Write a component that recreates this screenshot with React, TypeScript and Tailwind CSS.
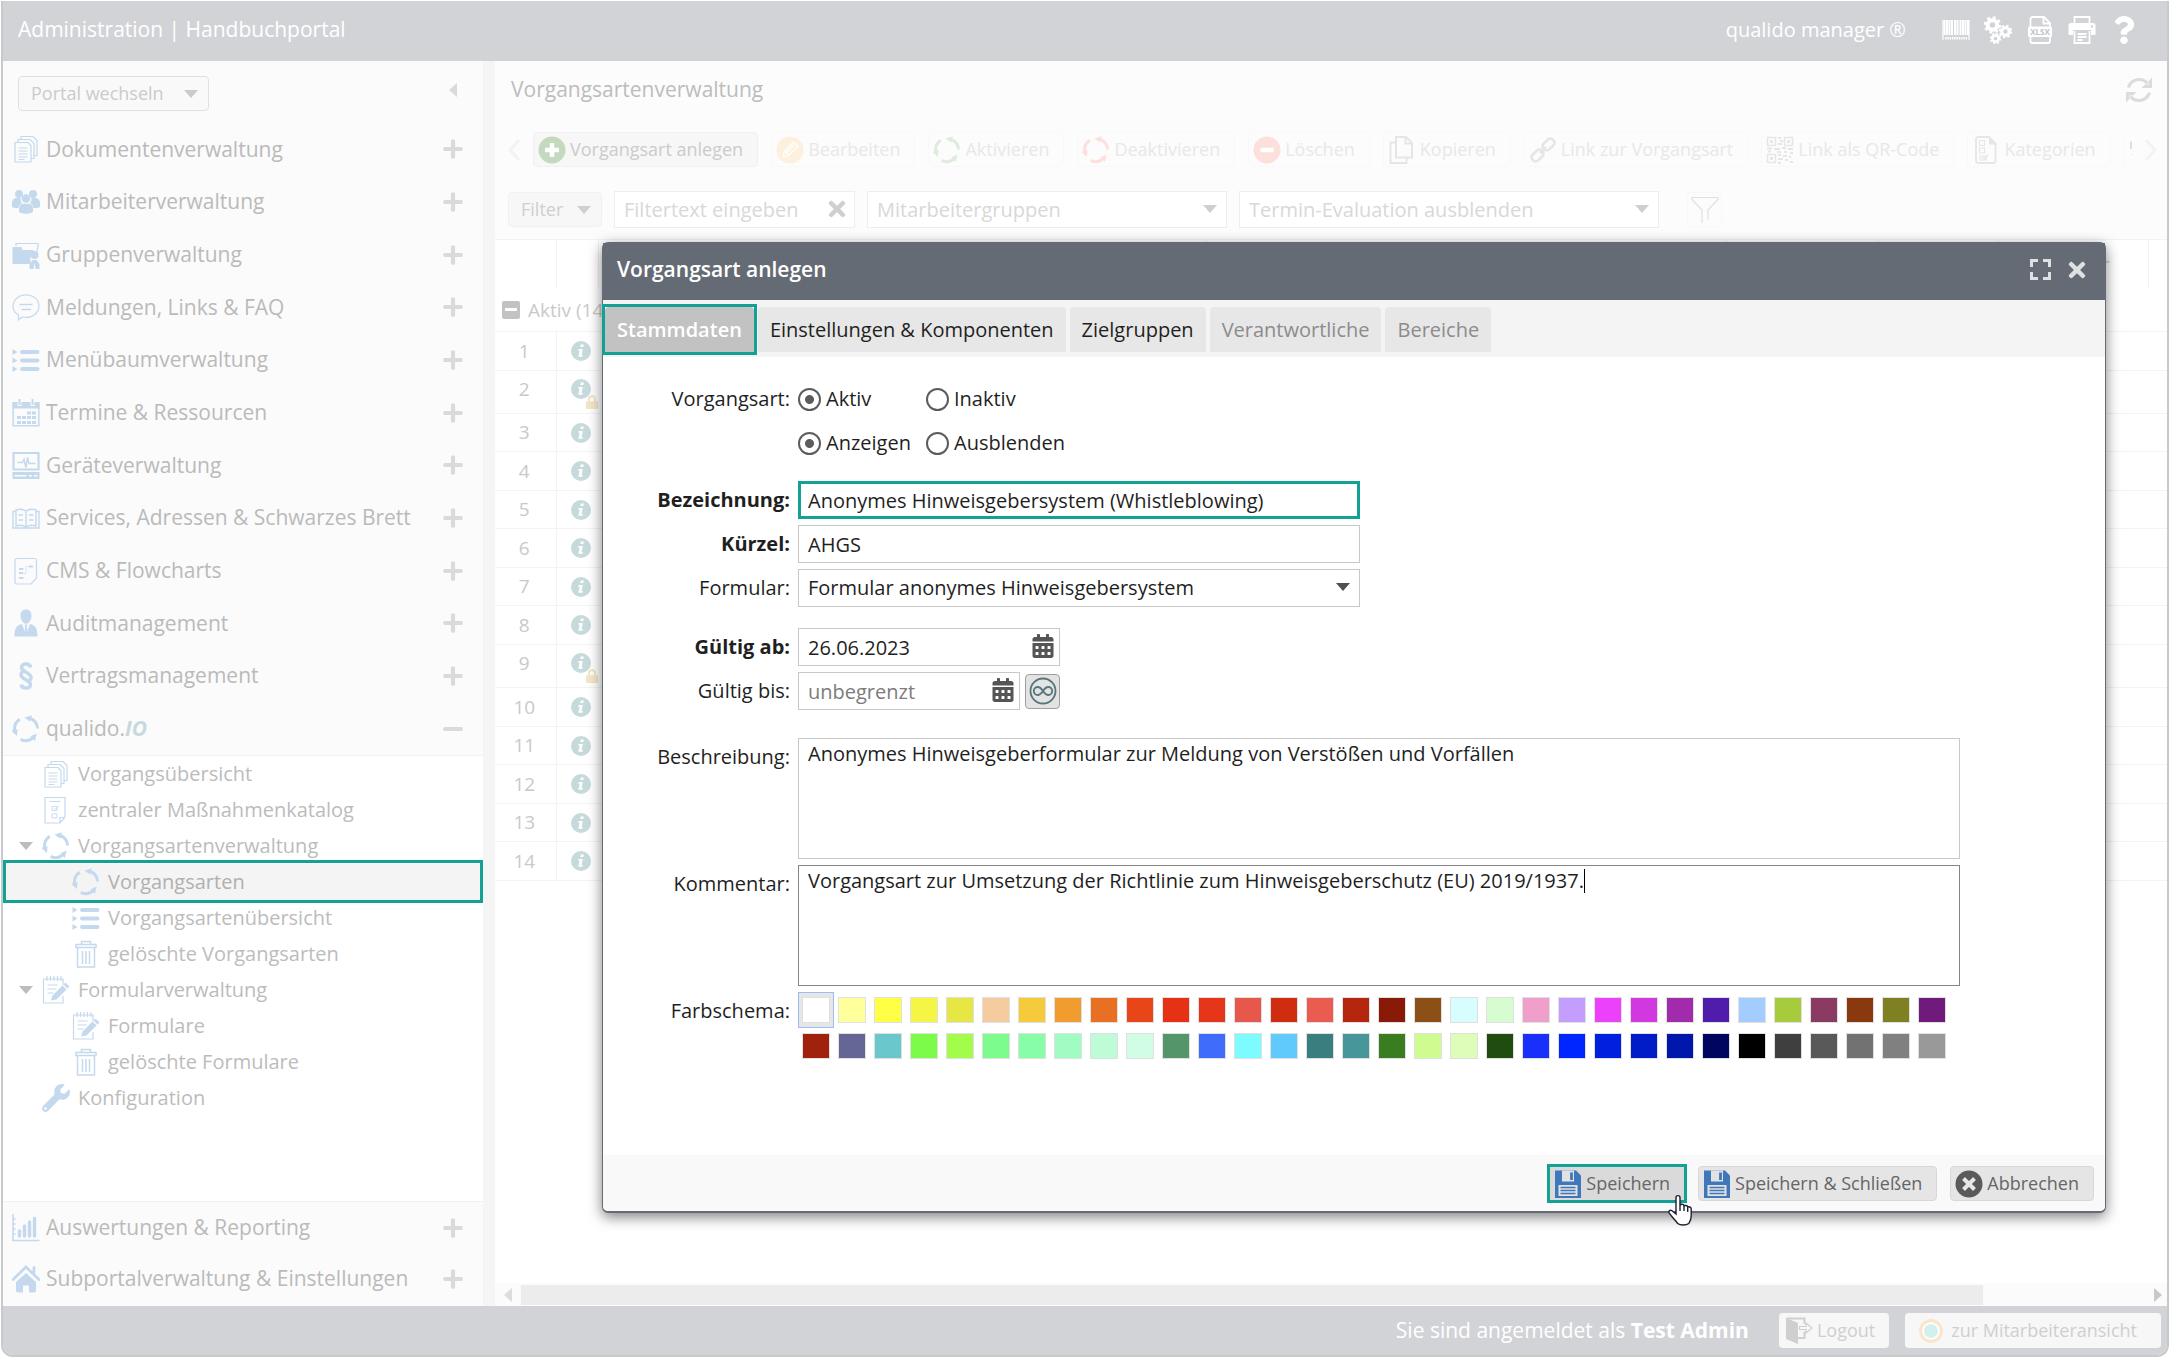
import type { ReactNode } from "react";
import clsx from "clsx";
import {
  FaCalendarAlt,
  FaLock,
  FaMinus,
  FaPlus,
  FaQuestion,
  FaTimes,
  FaWrench,
} from "react-icons/fa";

/* ---------- icons ---------- */

type IconProps = { className?: string };

function Svg({ className, children }: IconProps & { children: ReactNode }) {
  return (
    <svg
      viewBox="0 0 28 28"
      fill="none"
      stroke="currentColor"
      strokeWidth="1.2"
      aria-hidden="true"
      className={clsx("size-7 shrink-0", className)}
    >
      {children}
    </svg>
  );
}

const CycleIcon = ({ className }: IconProps) => (
  <Svg className={className}>
    {[0, 120, 240].map((angle) => (
      <g key={angle} transform={`rotate(${angle} 14 14)`}>
        <path d="M25.6 13.5A11.6 11.6 0 0 0 17.5 3.2" strokeWidth="3" />
        <path d="M12.5 2.6 20 0.2 18 6.6z" fill="currentColor" stroke="none" />
      </g>
    ))}
  </Svg>
);

const DocsIcon = ({ className }: IconProps) => (
  <Svg className={className}>
    <path d="M3 7.5h13l3 3V27H3zM6 7V4.5h12l4 4V23.5h-3M9 4V1.5h12l4 4V20.5h-3" />
    <path d="M6.5 13h9M6.5 16h9M6.5 19h9M6.5 22h9M6.5 24.5h6" />
  </Svg>
);

const PeopleIcon = () => (
  <Svg>
    <g fill="currentColor" stroke="none">
      <circle cx="7" cy="6" r="4" />
      <circle cx="21" cy="6" r="4" />
      <path d="M0 19v-4c0-3 2-5 5-5h3.500c0 3 .5 4 1.500 5.500-2 .5-3 2-3.500 4.500-3 0-5.500 0-6.500-1zM28 19v-4c0-3-2-5-5-5h-3.500c0 3-.5 4-1.500 5.500 2 .5 3 2 3.500 4.500 3 0 5.500 0 6.500-1z" />
      <circle cx="14" cy="10.500" r="4.300" />
      <path d="M7 23v-2.500c0-3 2-4.800 4.500-4.800h5c2.500 0 4.500 1.800 4.500 4.800V23c0 2-3 2.700-7 2.700S7 25 7 23z" />
    </g>
  </Svg>
);

const GroupFolderIcon = () => (
  <Svg>
    <path d="M4 5V2.5h22V5l-1.500 8" />
    <path d="M.5 6h9l1 3h11v4l-3 3v7h-1H.5z" fill="currentColor" stroke="none" />
    <circle cx="22.500" cy="14" r="4" fill="currentColor" stroke="none" />
    <path d="M17.500 28v-5l3-4h4l3 4v5h-4l-1-6-1 6z" fill="currentColor" stroke="none" />
  </Svg>
);

const SpeechIcon = () => (
  <Svg>
    <path d="M6.500 27v-5C3 20 1 17 1 13.500 1 7 6.500 1.800 14 1.800s13 5.200 13 11.200-5.500 11.400-13 11.400c-1.500 0-2.800 0-4-.4z" />
    <path d="M7.500 11.500h13M9.500 16.500h9.500" strokeWidth="1.500" />
  </Svg>
);

const ListIcon = ({ className }: IconProps) => (
  <Svg className={className}>
    <path d="M10 6h15.500M10 14.500h15.500M10 23h15.500" strokeWidth="4" strokeLinecap="round" />
    <path d="M.5 3l5 3-5 3zM.5 11.500l5 3-5 3zM.5 20l5 3-5 3z" fill="currentColor" stroke="none" />
  </Svg>
);

const CalendarGridIcon = () => (
  <Svg>
    <path d="M1.200 4h25.600v22.800H1.200z" strokeWidth="1.500" />
    <path d="M.5 3h27v6.500H.5z" fill="currentColor" stroke="none" />
    <path d="M7.500 0v7M20.500 0v7" strokeWidth="4" className="stroke-[#fbfbfb]" />
    <path d="M7.500 0v6M20.500 0v6" strokeWidth="2" />
    <path d="M15 14h9M5 18.500h19M5 23.500h19" strokeWidth="3" strokeDasharray="4 1" />
  </Svg>
);

const DeviceIcon = () => (
  <Svg>
    <path d="M1.500 2h25v16.500h-25z" strokeWidth="2.200" />
    <path d="M5.500 11.500h5l1.500-3 2 8 1.500-10 1.500 6h6.500" strokeWidth="1.500" />
    <path d="M.5 21h27v7H.5z" fill="currentColor" stroke="none" />
    <path d="M2.500 24.800h12M17 24.800h3M22 24.800h3.500" strokeWidth="1.500" className="stroke-[#fbfbfb]" />
  </Svg>
);

const BookIcon = () => (
  <Svg>
    <path d="M14 7c-3-2-7-2-10-1v16c3-1 7-1 10 1 3-2 7-2 10-1V6c-3-1-7-1-10 1v16M4 7.500H1V24h26V7.500h-3" strokeWidth="1.400" />
    <path d="M6.500 11H11M6.500 16H11M17 11h4.500M17 16h4.500" strokeWidth="1.500" />
  </Svg>
);

const FlowIcon = () => (
  <Svg>
    <path d="M24.500 21V3.500a2 2 0 0 0-2-2H5a2 2 0 0 0-2 2V25a2 2 0 0 0 2 2h14z" />
    <path d="M7 12h4.500M7 16h4M7 21h4.500M17 9.500h4" strokeWidth="2" />
    <path d="M11 16.500h3v-7h3" strokeWidth=".6" />
  </Svg>
);

const AuditorIcon = () => (
  <Svg>
    <g fill="currentColor" stroke="none">
      <path d="M14 .5c3.500 0 5.500 2.300 5.500 6 0 4.500-2.700 8.300-5.500 8.300S8.500 11 8.500 6.500c0-3.700 2-6 5.500-6z" />
      <path d="M2.500 27.500c0-7 1.500-11.500 7.500-12.500l4 11 4-11c6 1 7.500 5.500 7.500 12.500z" />
      <path d="M12.500 15.500h3l-.7 2 .8 6-1.600 2.500-1.600-2.500.8-6z" />
    </g>
  </Svg>
);

const ParagraphIcon = () => (
  <Svg>
    <path d="M18.500 5.500C18 1 9.500.8 9.500 5.500c0 4.500 9.500 5 9.500 10 0 2.500-2 4-4.500 4M9.200 22.500c.5 4.500 9.300 5 9.300 0 0-4.500-9.500-5-9.500-9.700 0-2.300 2-4 4.500-4" strokeWidth="3.600" />
  </Svg>
);

const CatalogIcon = ({ className }: IconProps) => (
  <Svg className={className}>
    <path d="M3 1.500h20V21l-5 6H3zM18 27v-5.500h5M7.500 5.500h11" />
    <path d="M10 10.500h5v4h-5zM10 18h5v4h-5zM12 12l1.500 1.500L17 9.500" strokeWidth=".9" />
  </Svg>
);

const TrashIcon = () => (
  <Svg>
    <path d="M4 4.500h20v3H4zM9.500 4V1.500h9V4M5.500 8v19h17V8M10.500 11v13M14 11v13M17.500 11v13" strokeWidth="1.500" />
  </Svg>
);

const NotepadIcon = ({ className }: IconProps) => (
  <Svg className={className}>
    <path d="M21 10V3H1.500v24H21v-7M5 0v5M8.500 0v5M12 0v5M15.500 0v5M19 0v5M5.500 9h10M5.500 13h9M5.500 17h6" />
    <path d="M9 24.500l1.500-5L23.500 6.500l4 4-13 13z" fill="currentColor" stroke="none" />
    <path d="M21 9l4 4" className="stroke-white" />
  </Svg>
);

const ChartIcon = () => (
  <Svg>
    <path d="M1 0v26.500h26.500M1 5h2.500M1 10h2.500M1 15h2.500M1 20h2.500" strokeWidth="1.500" />
    <path d="M7.500 17v5M12.500 12v10M17.500 8v14M22.500 4.500V22" strokeWidth="3.400" strokeLinecap="round" />
  </Svg>
);

const HomeIcon = () => (
  <Svg>
    <path d="M1 14.500 14 2l13 12.500M22 2.500v5" strokeWidth="2.800" strokeLinecap="round" />
    <path d="M4 17 14 8l10 9v8.500a2 2 0 0 1-2 2h-5v-7h-6v7H6a2 2 0 0 1-2-2z" fill="currentColor" stroke="none" />
  </Svg>
);

const BarcodeIcon = () => (
  <Svg>
    <path d="M2.500 4v15M5 4v15M7.500 4v15M10 4v15M13 4v15M15.500 4v15M18.500 4v15M21 4v15M23.500 4v15M26 4v15" strokeWidth="2" />
    <path d="M1 4v20M27 4v20" />
    <path d="M3 22.200h22" strokeWidth="2.500" strokeDasharray="1.500 .8" />
  </Svg>
);

const Gear = ({ x, y, s }: { x: number; y: number; s: number }) => (
  <g transform={`translate(${x} ${y}) scale(${s})`}>
    <circle r="4.800" strokeWidth="4" />
    <circle r="7.200" strokeWidth="3" strokeDasharray="2.830" />
  </g>
);

const GearsIcon = () => (
  <Svg>
    <Gear x={8.5} y={9} s={1} />
    <Gear x={21.5} y={15.5} s={0.78} />
    <Gear x={11.5} y={22.5} s={0.66} />
  </Svg>
);

const XlsxIcon = () => (
  <Svg>
    <path d="M4.500 11V3a2 2 0 0 1 2-2H18l6 6v4M17.500 1v6.500H24M4.500 20v5a2 2 0 0 0 2 2h15.500a2 2 0 0 0 2-2v-5" strokeWidth="1.800" />
    <rect x="2" y="10.500" width="24" height="10.500" rx="1.500" fill="currentColor" stroke="none" />
    <text x="14" y="18.800" textAnchor="middle" stroke="none" className="fill-[#bfc1c5] text-[8px] font-bold">
      XLSX
    </text>
  </Svg>
);

const PrinterIcon = () => (
  <Svg>
    <path d="M6.500 7V1h15v6" strokeWidth="1.800" />
    <path d="M3 7h22a2.500 2.500 0 0 1 2.500 2.500V18a1 1 0 0 1-1 1H23v-5H5v5H1.500a1 1 0 0 1-1-1V9.500A2.500 2.500 0 0 1 3 7z" fill="currentColor" stroke="none" />
    <path d="M6.500 15v12h15V15M9.500 18h9M9.500 21h9M9.500 24h5" strokeWidth="1.800" />
    <circle cx="24" cy="10.500" r="1.300" stroke="none" className="fill-[#d2d3d7]" />
  </Svg>
);

const RefreshIcon = () => (
  <Svg className="size-6">
    <path d="M3.500 11.500a11 11 0 0 1 19-4M24.500 16.500a11 11 0 0 1-19 4" strokeWidth="3.200" />
    <path d="M27 1.500v10.500H16.500l3.500-3.500h3.500V5zM1 26.500V16h10.500L8 19.500H4.500V23z" fill="currentColor" stroke="none" />
  </Svg>
);

const PencilCircleIcon = () => (
  <Svg>
    <circle cx="14" cy="14" r="13.500" fill="currentColor" stroke="none" />
    <path d="M7 21l1-5L17.500 6l4.500 4.500L12 20zM9 15.500l4 4M18 9l-7.500 8" className="stroke-white" />
  </Svg>
);

const SignCircleIcon = ({ plus, className }: IconProps & { plus?: boolean }) => (
  <Svg className={className}>
    <circle cx="14" cy="14" r="13.500" fill="currentColor" stroke="none" />
    <path d={plus ? "M7 14h14M14 7v14" : "M7.500 14h13"} strokeWidth="4.500" className="stroke-white" />
  </Svg>
);

const CopyIcon = () => (
  <Svg>
    <path d="M8 1h10l6 6v14.500H8zM17.500 1.500v6H24M7.500 6.500h-5V27h16v-5" strokeWidth="2" />
  </Svg>
);

const LinkIcon = () => (
  <Svg>
    <g strokeWidth="2.600">
      <rect x="-6.500" y="-4" width="13" height="8" rx="3.500" transform="translate(19.500 8.500) rotate(-45)" />
      <rect x="-6.500" y="-4" width="13" height="8" rx="3.500" transform="translate(8.500 19.500) rotate(-45)" />
      <path d="M11 17l6-6" />
    </g>
  </Svg>
);

const QrIcon = () => (
  <Svg>
    <path d="M1.500 1.500h8v8h-8zM18.500 1.500h8v8h-8zM1.500 18.500h8v8h-8z" strokeWidth="1.600" />
    <path d="M4 5.500h3M21 5.500h3M4 22.500h3" strokeWidth="3" />
    <path d="M12 2h3M14 5h3M12 8h4M1 12.500h5M8 13h6M16 12h4M22 13h5M2 15.500h3M11 16h4M18 16h3M24 17h3M12 19h3M17 20h4M23 21h2M12 23h5M19 24h3M24 26h3M12 27h3" strokeWidth="1.900" />
  </Svg>
);

const CategoriesIcon = () => (
  <Svg>
    <path d="M23.500 8v17a2 2 0 0 1-2 2H6a2 2 0 0 1-2-2V3a2 2 0 0 1 2-2h11z" strokeWidth="1.800" />
    <path d="M17.500 1v7h6.500z" fill="currentColor" />
    <path d="M7.500 4.500h5v5h-5zM7.500 12h5v5h-5zM8 20h6v4H8zM10 21l2 2 4-4" />
  </Svg>
);

const CollapseIcon = () => (
  <Svg>
    <path d="M1 4.500 4 7.500 8 3.500V7L11.500 4.500V13H1z" fill="currentColor" stroke="none" />
    <path d="M3 17.500 9 24" strokeWidth="2.800" />
  </Svg>
);

const FunnelIcon = () => (
  <Svg>
    <path d="M11 27V14L1 3.500V1.500h26v2L17 14v9.500" />
  </Svg>
);

const SaveIcon = () => (
  <Svg className="text-[#3f78ba]">
    <path d="M1 .5h21l5 5V28H1z" fill="currentColor" stroke="none" />
    <path d="M8 .5h12v11H8z" className="fill-[#e2e2e2]" stroke="none" />
    <path d="M17.500 2.500v7.500" strokeWidth="2.800" />
    <path d="M4.500 15h19V26h-19z" className="fill-[#e2e2e2]" stroke="none" />
    <path d="M6.500 17.500h15M6.500 20.500h15M6.500 23.500h15" strokeWidth="1.500" />
  </Svg>
);

const CancelIcon = () => (
  <Svg className="text-[#5a5a5a]">
    <circle cx="14" cy="14" r="13.500" fill="currentColor" stroke="none" />
    <path d="M8.500 8.500l11 11M19.500 8.500l-11 11" strokeWidth="4" className="stroke-[#e6e6e6]" />
  </Svg>
);

const LogoutIcon = () => (
  <Svg className="text-[#cfcfcf]">
    <path d="M1 1l12 5v21L1 22z" fill="currentColor" stroke="none" />
    <path d="M2 1.500h17.500V7M19.500 14.500V21H13" strokeWidth="2" />
    <path d="M14.500 9.500H21V6l6 5-6 5v-3.500h-6.500z" />
  </Svg>
);

const InfinityIcon = () => (
  <Svg className="size-6 text-[#56767a]">
    <circle cx="14" cy="14" r="12.500" strokeWidth="1.800" />
    <path d="M14 14c-2-3-3.500-4-5.200-4a4 4 0 0 0 0 8c1.700 0 3.200-1 5.200-4s3.500-4 5.200-4a4 4 0 0 1 0 8c-1.700 0-3.200-1-5.200-4z" strokeWidth="1.800" />
  </Svg>
);

const InfoIcon = () => (
  <svg viewBox="0 0 20 20" className="size-5 fill-[#c6dadc]" role="img" aria-label="Info">
    <circle cx="10" cy="10" r="10" />
    <path d="M9.800 3.500h3l-.5 2.500h-3zM7.500 8h4.300l-1.300 6h1.300l-.3 1.800H7.300L8.700 9.700H7.300z" className="fill-white" />
  </svg>
);

const Caret = ({ className }: IconProps) => (
  <svg viewBox="0 0 14 8" aria-hidden="true" className={clsx("h-2 w-3.5 shrink-0 fill-current", className)}>
    <path d="M0 0h14L7 8z" />
  </svg>
);

const HandCursor = () => (
  <svg viewBox="0 0 24 32" aria-hidden="true" className="absolute top-[27px] left-full z-10 -ml-4 h-8 w-6 fill-white stroke-[#1b2030]">
    <path
      d="M8 20V3.500C8 1 12 1 12 3.500V11c.8-1.200 4-1 4 1 .8-1 3.700-.6 3.700 1.200 1-.8 3.500-.3 3.500 1.600V22c0 4-1.200 5.500-2.500 7.500-2.500 2-8.500 2-11 0C8 27 3.500 22.500 1.200 18.800c-1-2 1-3.300 2.800-2L8 20zM12 11.500V17M16 12.500V17M19.700 13.500V18"
      strokeWidth="1.400"
    />
  </svg>
);

/* ---------- data ---------- */

const MENU = [
  { label: "Dokumentenverwaltung", icon: <DocsIcon /> },
  { label: "Mitarbeiterverwaltung", icon: <PeopleIcon /> },
  { label: "Gruppenverwaltung", icon: <GroupFolderIcon /> },
  { label: "Meldungen, Links & FAQ", icon: <SpeechIcon /> },
  { label: "Menübaumverwaltung", icon: <ListIcon /> },
  { label: "Termine & Ressourcen", icon: <CalendarGridIcon /> },
  { label: "Geräteverwaltung", icon: <DeviceIcon /> },
  { label: "Services, Adressen & Schwarzes Brett", icon: <BookIcon /> },
  { label: "CMS & Flowcharts", icon: <FlowIcon /> },
  { label: "Auditmanagement", icon: <AuditorIcon /> },
  { label: "Vertragsmanagement", icon: <ParagraphIcon /> },
];

const MENU_BOTTOM = [
  { label: "Auswertungen & Reporting", icon: <ChartIcon /> },
  { label: "Subportalverwaltung & Einstellungen", icon: <HomeIcon /> },
];

const TREE = [
  { label: "Vorgangsübersicht", icon: <DocsIcon />, level: 1 },
  { label: "zentraler Maßnahmenkatalog", icon: <CatalogIcon />, level: 1 },
  { label: "Vorgangsartenverwaltung", icon: <CycleIcon />, level: 1, open: true },
  { label: "Vorgangsarten", icon: <CycleIcon />, level: 2, active: true },
  { label: "Vorgangsartenübersicht", icon: <ListIcon />, level: 2 },
  { label: "gelöschte Vorgangsarten", icon: <TrashIcon />, level: 2 },
  { label: "Formularverwaltung", icon: <NotepadIcon />, level: 1, open: true },
  { label: "Formulare", icon: <NotepadIcon />, level: 2 },
  { label: "gelöschte Formulare", icon: <TrashIcon />, level: 2 },
  { label: "Konfiguration", icon: <FaWrench className="size-7 -scale-x-100 rotate-90" />, level: 1 },
];

const ACTIONS = [
  { label: "Bearbeiten", icon: <PencilCircleIcon />, color: "text-[#fdf0de]" },
  { label: "Aktivieren", icon: <CycleIcon />, color: "text-[#e0ebdf]" },
  { label: "Deaktivieren", icon: <CycleIcon />, color: "text-[#fde0dc]" },
  { label: "Löschen", icon: <SignCircleIcon />, color: "text-[#fde0dc]" },
  { label: "Kopieren", icon: <CopyIcon />, color: "text-[#e6e6e6]" },
  { label: "Link zur Vorgangsart", icon: <LinkIcon />, color: "text-[#e6e6e6]" },
  { label: "Link als QR-Code", icon: <QrIcon />, color: "text-[#e6e6e6]" },
  { label: "Kategorien", icon: <CategoriesIcon />, color: "text-[#e6e6e6]" },
];

const ROWS = Array.from({ length: 14 }, (_, i) => i + 1);
const LOCKED = [2, 9];

const COLORS = [
  "#ffffff", "#ffff9c", "#ffff45", "#f5f545", "#e6e645", "#f5cca0", "#f5cb3c", "#f09c2e",
  "#e97022", "#e84618", "#e63214", "#e63619", "#e8574c", "#cf2c10", "#ea5b50", "#b5260e",
  "#8a1a08", "#8c5016", "#d7fdff", "#d6fcd0", "#f09fca", "#c39eff", "#ec40fa", "#d138e0",
  "#a12aad", "#501cac", "#a3cdff", "#a6cb3c", "#8b3a62", "#8a380e", "#7f8022", "#701a7c",
  "#a0220c", "#666696", "#6ac8cc", "#7cfc48", "#a4fc4a", "#7cfc8c", "#88fda8", "#a0fcc2",
  "#befcd8", "#d0fde4", "#55956a", "#3f6cfa", "#7cfcff", "#60cafc", "#3a7e80", "#47969a",
  "#3a7c20", "#cefc90", "#ddfdb8", "#204c10", "#1830fa", "#0026ff", "#0020e0", "#001cc8",
  "#0016ac", "#000660", "#000000", "#3f3f3f", "#595959", "#727272", "#808080", "#999999",
];

/* ---------- layout ---------- */

function Header() {
  return (
    <header className="flex h-[60px] shrink-0 items-center justify-between bg-[#d2d3d7] pr-[29px] pb-0.5 pl-[15px] text-white">
      <h1 className="text-[21px] font-medium">Administration | Handbuchportal</h1>
      <div className="flex items-center gap-3.5">
        <span className="mr-[22px] text-[20px] font-medium">qualido manager ®</span>
        <BarcodeIcon />
        <GearsIcon />
        <XlsxIcon />
        <PrinterIcon />
        <FaQuestion className="size-7" />
      </div>
    </header>
  );
}

function MenuItem({ label, icon, open }: { label: ReactNode; icon: ReactNode; open?: boolean }) {
  return (
    <button type="button" className="flex w-full items-center pr-[19px] pl-[9px] text-left text-[21px] text-[#bababa]">
      <span className="w-[34px] text-[#c5d9ee]">{icon}</span>
      <span className="grow">{label}</span>
      {open ? <FaMinus className="size-[22px] text-[#dadada]" /> : <FaPlus className="size-[22px] text-[#dadada]" />}
    </button>
  );
}

function Sidebar() {
  return (
    <nav className="flex w-[480px] shrink-0 flex-col bg-[#fbfbfb]">
      <div className="flex items-start justify-between px-[15px] pt-[15px]">
        <button type="button" className="flex h-[35px] w-[191px] items-center justify-between rounded border border-[#e0e0e0] bg-[#f9f9f9] px-2.5 pl-3 text-[18px] text-[#cbcbcb]">
          Portal wechseln
          <Caret />
        </button>
        <Caret className="mt-2.5 mr-2 rotate-90 text-[#dadada]" />
      </div>

      <div className="mt-3 grid h-[632px] auto-rows-fr">
        {MENU.map(({ label, icon }) => (
          <MenuItem key={label} label={label} icon={icon} />
        ))}
        <MenuItem
          open
          icon={<CycleIcon />}
          label={
            <>
              qualido.<i className="font-bold text-[#c6dadc]">IO</i>
            </>
          }
        />
      </div>

      <ul className="grow border-y border-[#f1f1f1] bg-white text-[20px] text-[#bcbcbc]">
        {TREE.map(({ label, icon, level, open, active }) => (
          <li key={label} className={clsx("relative flex h-9 items-center", active && "bg-[#f4f4f4] text-[#b0b0b0]")}>
            <span className={clsx("flex shrink-0 pl-4", level === 1 ? "w-[39px]" : "w-[69px]")}>
              {open && <Caret />}
            </span>
            <span className="w-9 text-[#c5d9ee]">{icon}</span>
            <a href="#">{label}</a>
            {active && <span className="absolute inset-x-0 -top-1 -bottom-[3px] border-3 border-[#12a194]" />}
          </li>
        ))}
      </ul>

      <div className="grid h-[104px] auto-rows-fr pb-0.5">
        {MENU_BOTTOM.map(({ label, icon }) => (
          <MenuItem key={label} label={label} icon={icon} />
        ))}
      </div>
    </nav>
  );
}

function Toolbar() {
  return (
    <div className="flex h-[35px] items-center gap-[13px] overflow-hidden pr-2.5 pl-[13px] text-[18px] whitespace-nowrap">
      <svg viewBox="0 0 12 24" className="h-6 w-3 shrink-0 fill-none stroke-[#f3f3f3]" strokeWidth="3">
        <path d="M11 2 2 12l9 10" />
      </svg>
      <button type="button" className="flex h-full shrink-0 items-center gap-1 rounded border border-[#f1f1f1] bg-[#f7f7f7] pr-3.5 pl-1 text-[#cbcbcb]">
        <SignCircleIcon plus className="text-[#c4dabf]" />
        Vorgangsart anlegen
      </button>
      {ACTIONS.map(({ label, icon, color }) => (
        <button key={label} type="button" disabled className="flex h-full shrink-0 items-center gap-1 rounded border border-[#f8f8f8] pr-3.5 pl-1 text-[#e8e8e8]">
          <span className={color}>{icon}</span>
          {label}
        </button>
      ))}
      <div className="flex h-full w-3 grow items-center overflow-hidden rounded-l border border-r-0 border-[#f8f8f8] pl-1 text-[#dedede]">
        <CollapseIcon />
      </div>
      <svg viewBox="0 0 12 24" className="h-6 w-3 shrink-0 fill-none stroke-[#f3f3f3]" strokeWidth="3">
        <path d="m1 2 9 10-9 10" />
      </svg>
    </div>
  );
}

function Filters() {
  return (
    <div className="flex h-[37px] items-center gap-3 pl-[13px] text-[20px] text-[#d8d8d8]">
      <button type="button" className="flex h-[35px] w-[94px] items-center justify-between rounded border border-[#f1f1f1] bg-[#f7f7f7] px-2.5 pl-3 text-[18px] text-[#cfcfcf]">
        Filter
        <Caret />
      </button>
      <div className="relative w-[241px]">
        <input
          aria-label="Filtertext"
          placeholder="Filtertext eingeben"
          className="h-[37px] w-full border border-[#eeeeee] bg-white pl-[9px] placeholder:text-[#d8d8d8]"
        />
        <FaTimes className="absolute top-1.5 right-1.5 size-6 text-[#cfcfcf]" />
      </div>
      <div className="relative w-[360px]">
        <select aria-label="Mitarbeitergruppen" className="h-[37px] w-full appearance-none border border-[#eeeeee] bg-white pl-[9px]">
          <option>Mitarbeitergruppen</option>
        </select>
        <Caret className="absolute top-3.5 right-2.5 text-[#cfcfcf]" />
      </div>
      <div className="relative w-[420px]">
        <select aria-label="Termin-Evaluation" className="h-[37px] w-full appearance-none border border-[#eeeeee] bg-white pl-[9px]">
          <option>Termin-Evaluation ausblenden</option>
        </select>
        <Caret className="absolute top-3.5 right-2.5 text-[#cfcfcf]" />
      </div>
      <button type="button" aria-label="Filter anwenden" className="ml-4 flex size-[35px] items-center justify-center rounded border border-[#f8f8f8] text-[#e0e0e0]">
        <FunnelIcon />
      </button>
    </div>
  );
}

function ProcessTable() {
  return (
    <table className="w-full table-fixed border-collapse border-t border-[#f3f3f3] text-[19px] text-[#c9c9c9]">
      <colgroup>
        <col className="w-[61px]" />
        <col className="w-[42px]" />
        <col className="w-[608px]" />
        <col className="w-[520px]" />
        <col className="w-[152px]" />
        <col className="w-[120px]" />
        <col className="w-[150px]" />
        <col />
      </colgroup>
      <thead>
        <tr className="h-[49px]">
          {["", "", "", "", "", "", "Sortier"].map((title, i) => (
            <th key={i} className="border-r border-[#f3f3f3] pr-[38px] text-right font-normal">{title}</th>
          ))}
          <th />
        </tr>
      </thead>
      <tbody>
        <tr className="h-[43px] border-b border-[#f3f3f3]">
          <td colSpan={8} className="pl-[7px]">
            <span className="flex items-center gap-2">
              <span className="flex size-[18px] items-center justify-center rounded-xs bg-[#c2c2c2]">
                <span className="h-[3px] w-3 bg-white" />
              </span>
              Aktiv (14)
            </span>
          </td>
        </tr>
        {ROWS.map((n) => (
          <tr
            key={n}
            className={clsx(
              "border-b border-[#f3f3f3]",
              LOCKED.includes(n) ? "h-[43px] align-top" : n === 1 || n % 2 === 0 ? "h-[39px]" : "h-[38px]",
            )}
          >
            <td className="border-r border-[#f3f3f3] py-1 pr-0.5 text-center">{n}</td>
            <td className="py-2 pl-2">
              <span className="relative mx-auto block w-5">
                <InfoIcon />
                {LOCKED.includes(n) && <FaLock className="absolute top-4 left-3.5 size-3.5 text-[#f3e7c9]" />}
              </span>
            </td>
            <td colSpan={6} />
          </tr>
        ))}
      </tbody>
    </table>
  );
}

function Main() {
  return (
    <main className="flex min-w-0 grow flex-col border-l-12 border-[#f5f5f5] bg-white">
      <div className="bg-[#fcfcfc] pb-[11px]">
        <div className="flex h-[71px] items-center justify-between pr-3.5 pb-3.5 pl-4">
          <h2 className="text-[21px] text-[#bcbcbc]">Vorgangsartenverwaltung</h2>
          <button type="button" aria-label="Aktualisieren" className="text-[#dcdcdc]">
            <RefreshIcon />
          </button>
        </div>
        <Toolbar />
        <div className="mt-6">
          <Filters />
        </div>
      </div>
      <div className="grow">
        <ProcessTable />
      </div>
      {/* horizontal scrollbar */}
      <div className="flex h-[23px] items-center bg-[#fbfbfb] pr-0.5 pl-1.5 text-[#dcdcdc]">
        <Caret className="rotate-90" />
        <div className="mx-1.5 h-5 grow">
          <div className="h-full w-9/10 bg-[#ececec]" />
        </div>
        <Caret className="-rotate-90 text-[#c8c8c8]" />
      </div>
    </main>
  );
}

function Footer() {
  return (
    <footer className="flex h-[49px] shrink-0 items-center justify-end bg-[#d2d3d7] pr-1.5 text-[18px] text-[#cfcfcf]">
      <p className="mr-[30px] text-[21px] text-white">
        Sie sind angemeldet als <b>Test Admin</b>
      </p>
      <button type="button" className="mr-4 flex h-[35px] items-center gap-1 rounded bg-[#f7f7f7] pr-3.5 pl-1.5">
        <LogoutIcon />
        Logout
      </button>
      <button type="button" className="flex h-[35px] items-center gap-2 rounded bg-[#f7f7f7] pr-6 pl-3.5">
        <span className="size-6 rounded-full border-3 border-[#fbe6cb] bg-[#d5efee] ring-2 ring-white ring-inset" />
        zur Mitarbeiteransicht
      </button>
    </footer>
  );
}

/* ---------- dialog ---------- */

function Row({ label, htmlFor, bold, top, children }: {
  label?: string;
  htmlFor?: string;
  bold?: boolean;
  top?: boolean;
  children: ReactNode;
}) {
  return (
    <div className={clsx("flex gap-2", top ? "items-start" : "items-center")}>
      <label htmlFor={htmlFor} className={clsx("w-[187px] shrink-0 text-right leading-[38px]", bold && "font-bold")}>
        {label}
      </label>
      {children}
    </div>
  );
}

function Radio({ name, label, checked, className }: { name: string; label: string; checked?: boolean; className?: string }) {
  return (
    <label className={clsx("flex h-11 items-center gap-[5px]", className)}>
      <input
        type="radio"
        name={name}
        defaultChecked={checked}
        className="size-[23px] appearance-none rounded-full border-2 border-[#5c5c5c] bg-white checked:bg-[radial-gradient(circle,#5c5c5c_4px,transparent_5px)]"
      />
      {label}
    </label>
  );
}

const TAB = "h-[45px] rounded-t px-3 bg-[#e7e7e7]";
const FIELD = "h-[38px] w-full border border-[#c8c8c8] bg-white px-[9px]";
const BTN = "relative flex h-[35px] items-center gap-1 rounded border border-[#d8d8d8] pr-3.5 pl-1";

function Dialog() {
  return (
    <section
      role="dialog"
      aria-label="Vorgangsart anlegen"
      className="absolute top-[242px] right-16 left-[602px] rounded-md border border-b-2 border-[#656b75] bg-white text-[20px] text-[#1f1f1f] shadow-[0_4px_14px_rgba(0,0,0,0.5)]"
    >
      <header className="flex h-[57px] items-center justify-between bg-[#656b75] pr-4 pb-1 pl-3.5 text-white">
        <h2 className="text-[21px] font-semibold">Vorgangsart anlegen</h2>
        <div className="flex items-center gap-3.5 text-[#dfe0e2]">
          <button type="button" aria-label="Maximieren">
            <svg viewBox="0 0 21 21" className="size-[21px] fill-none stroke-current" strokeWidth="3">
              <path d="M1.500 8V1.500H8M13 1.500h6.500V8M19.500 13v6.500H13M8 19.500H1.500V13" />
            </svg>
          </button>
          <button type="button" aria-label="Schließen">
            <FaTimes className="size-6" />
          </button>
        </div>
      </header>

      <div role="tablist" className="flex h-[57px] items-center gap-1 bg-[#f4f4f4] pt-0.5 pl-0.5">
        <button role="tab" aria-selected="true" className="relative h-[45px] rounded-t bg-[#c2c2c2] px-3 font-semibold text-white">
          Stammdaten
          <span className="absolute -inset-[3px] border-3 border-[#12a194]" />
        </button>
        <button role="tab" className={TAB}>Einstellungen & Komponenten</button>
        <button role="tab" className={TAB}>Zielgruppen</button>
        <button role="tab" disabled className={clsx(TAB, "text-[#8c8c8c]")}>Verantwortliche</button>
        <button role="tab" disabled className={clsx(TAB, "text-[#8c8c8c]")}>Bereiche</button>
      </div>

      <form className="pt-5 pb-[91px]">
        <Row label="Vorgangsart:">
          <Radio name="state" label="Aktiv" checked className="w-[120px]" />
          <Radio name="state" label="Inaktiv" />
        </Row>
        <Row>
          <Radio name="visibility" label="Anzeigen" checked className="w-[120px]" />
          <Radio name="visibility" label="Ausblenden" />
        </Row>

        <div className="mt-4 flex flex-col gap-1.5">
          <Row label="Bezeichnung:" htmlFor="title" bold>
            <div className="w-[562px]">
              <input id="title" defaultValue="Anonymes Hinweisgebersystem (Whistleblowing)" className="h-[38px] w-full border-3 border-[#12a194] bg-white px-[7px]" />
            </div>
          </Row>
          <Row label="Kürzel:" htmlFor="short" bold>
            <div className="w-[562px]">
              <input id="short" defaultValue="AHGS" className={FIELD} />
            </div>
          </Row>
          <Row label="Formular:" htmlFor="form">
            <div className="relative w-[562px]">
              <select id="form" className={clsx(FIELD, "appearance-none")}>
                <option>Formular anonymes Hinweisgebersystem</option>
              </select>
              <Caret className="absolute top-3.5 right-2.5 text-[#505050]" />
            </div>
          </Row>
        </div>

        <div className="mt-[21px] flex flex-col gap-1.5">
          <Row label="Gültig ab:" htmlFor="from" bold>
            <div className="relative w-[262px]">
              <input id="from" defaultValue="26.06.2023" className={FIELD} />
              <FaCalendarAlt className="absolute top-1.5 right-[5px] size-6 text-[#555555]" />
            </div>
          </Row>
          <Row label="Gültig bis:" htmlFor="to">
            <div className="flex w-[262px] items-center gap-[5px]">
              <div className="relative grow">
                <input id="to" placeholder="unbegrenzt" className={clsx(FIELD, "placeholder:text-[#7c7c7c]")} />
                <FaCalendarAlt className="absolute top-1.5 right-[5px] size-6 text-[#555555]" />
              </div>
              <button type="button" aria-label="unbegrenzt" className="flex size-[35px] shrink-0 items-center justify-center rounded border border-[#9f9f9f] bg-[#e3e3e3]">
                <InfinityIcon />
              </button>
            </div>
          </Row>
        </div>

        <div className="mt-7 mr-[145px] flex flex-col gap-1.5">
          <Row label="Beschreibung:" htmlFor="description" top>
            <textarea
              id="description"
              defaultValue="Anonymes Hinweisgeberformular zur Meldung von Verstößen und Vorfällen"
              className="h-[121px] grow resize-none border border-[#c8c8c8] px-[9px] leading-[30px]"
            />
          </Row>
          <Row label="Kommentar:" htmlFor="comment" top>
            <div className="relative flex grow">
              <textarea
                id="comment"
                defaultValue="Vorgangsart zur Umsetzung der Richtlinie zum Hinweisgeberschutz (EU) 2019/1937."
                className="h-[121px] grow resize-none border border-[#858585] px-[9px] leading-[30px]"
              />
              <span className="absolute top-1 left-[786px] h-6 w-px bg-black" />
            </div>
          </Row>
          <Row label="Farbschema:" top>
            <div className="flex w-[1152px] flex-wrap">
              {COLORS.map((color, i) => (
                <label
                  key={color}
                  aria-label={color}
                  className={clsx(
                    "flex size-9 items-center justify-center border",
                    i === 0 ? "border-[#9dbdf0] bg-[#e6e6e6]" : "border-transparent",
                  )}
                >
                  <input
                    type="radio"
                    name="color"
                    defaultChecked={i === 0}
                    className="h-[26px] w-7 appearance-none border border-[#e0e0e0]"
                    style={{ backgroundColor: color }}
                  />
                </label>
              ))}
            </div>
          </Row>
        </div>
      </form>

      <footer className="flex h-14 items-center justify-end gap-[13px] rounded-b-md bg-[#f9f9f9] pt-px pr-[11px] text-[18px] text-[#666666]">
        <button type="button" className={clsx(BTN, "bg-[#dadada]")}>
          <SaveIcon />
          Speichern
          <span className="absolute -inset-[3px] border-3 border-[#12a194]" />
          <HandCursor />
        </button>
        <button type="button" className={clsx(BTN, "bg-[#e5e5e5]")}>
          <SaveIcon />
          Speichern & Schließen
        </button>
        <button type="button" className={clsx(BTN, "bg-[#e5e5e5]")}>
          <CancelIcon />
          Abbrechen
        </button>
      </footer>
    </section>
  );
}

export default function App() {
  return (
    <div className="relative h-screen bg-white p-px font-['Open_Sans',sans-serif]">
      <div className="flex h-full flex-col overflow-hidden rounded-b-xl border-2 border-t-0 border-[#c8c9cb]">
        <Header />
        <div className="flex min-h-0 grow">
          <Sidebar />
          <Main />
        </div>
        <Footer />
      </div>
      <Dialog />
    </div>
  );
}
